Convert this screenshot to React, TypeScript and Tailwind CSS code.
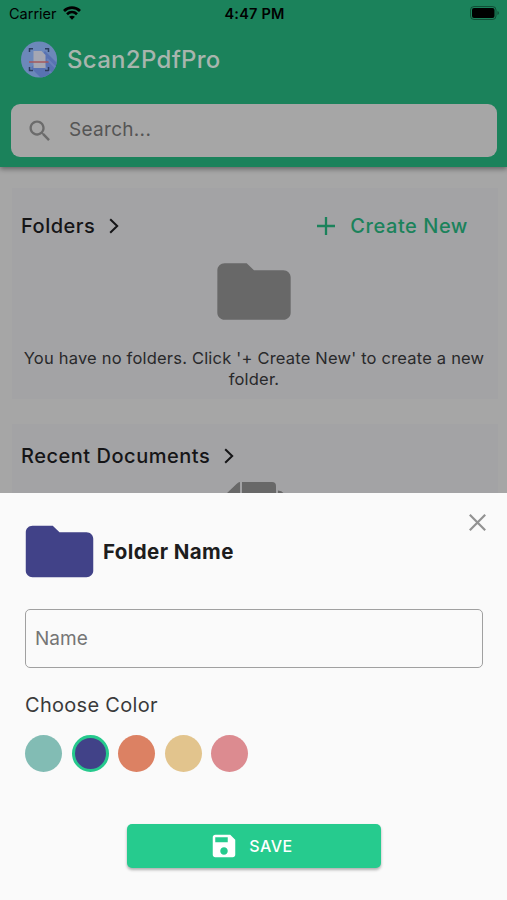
import React, { useState } from 'react';

const colors = [
  { name: 'teal', value: '#82bcb4' },
  { name: 'indigo', value: '#414288' },
  { name: 'orange', value: '#dc8163' },
  { name: 'sand', value: '#e2c48d' },
  { name: 'pink', value: '#dc8b90' },
];

const FOLDER_PATH = 'M10 4H4c-1.1 0-1.99.9-1.99 2L2 18c0 1.1.9 2 2 2h16c1.1 0 2-.9 2-2V8c0-1.1-.9-2-2-2h-8l-2-2z';

const StatusBar: React.FC = () => (
  <div className="grid grid-cols-3 items-center h-[27px] pl-[9px] pr-[7px] text-black">
    <div className="flex items-center gap-[6px]">
      <span className="pt-px text-[14.5px] leading-none">Carrier</span>
      <svg className="mb-px" width="18" height="14" viewBox="0 0 18 14" fill="none" stroke="currentColor" strokeWidth="2.7">
        <path d="M1 5C5.5.5 12.5.5 17 5" />
        <path d="M4 8.2c2.9-2.7 7.1-2.7 10 0" />
        <path d="M9 13.7 6.1 10.8c1.7-1.4 4.1-1.4 5.8 0z" fill="currentColor" stroke="none" />
      </svg>
    </div>
    <span className="pt-px text-center text-[14.5px] leading-none font-semibold tracking-[0.2px]">4:47 PM</span>
    <svg className="justify-self-end mb-[2px]" width="30" height="14" viewBox="0 0 30 14">
      <rect x="0.5" y="0.5" width="25.5" height="13" rx="3.5" fill="none" stroke="#000" strokeOpacity="0.4" />
      <rect x="2" y="2" width="22.5" height="10" rx="2" fill="#000" />
      <path d="M27.5 5v4c1.800-.7 1.800-3.300 0-4z" fill="#000" fillOpacity="0.45" />
    </svg>
  </div>
);

const Logo: React.FC = () => (
  <svg width="37" height="37" viewBox="0 0 37 37">
    <defs>
      <clipPath id="disc">
        <circle cx="18" cy="18.5" r="18" />
      </clipPath>
    </defs>
    <g clipPath="url(#disc)">
      <rect width="37" height="37" fill="#6c88ba" />
      <path d="M24 10 37 23v14H20L10 27z" fill="#5872b2" />
      <path d="m26 18 11 11M22 24l13 13" stroke="#6780ba" strokeWidth="2" />
    </g>
    <path d="M12.5 10h8l4 4v13h-12z" fill="#a5a7b3" />
    <path d="M8.5 11V7.7H12M24 7.7h3.5V11M8.5 26v3.5H12M24 29.5h3.5V26" fill="none" stroke="#2c3d5e" strokeWidth="1.5" />
    <path d="M8 21h19.5" stroke="#a5595c" strokeWidth="1.5" />
  </svg>
);

const Chevron: React.FC = () => (
  <svg width="10" height="16" viewBox="0 0 10 16" fill="none" stroke="#151517" strokeWidth="2">
    <path d="m1.200 1.200 7 6.800-7 6.800" />
  </svg>
);

const Header: React.FC = () => (
  <header className="relative h-[167px] bg-[#1b825b] shadow-[0_2px_5px_rgba(0,0,0,0.4)]">
    <StatusBar />
    <div className="flex items-center h-[65px] pl-[21px] gap-[9px]">
      <Logo />
      <h1 className="text-[24px] font-medium text-[#a8b5ae] tracking-[0.3px]">Scan2PdfPro</h1>
    </div>
    <div className="flex items-center mt-3 ml-[11px] mr-[10px] h-[53px] rounded-[9px] bg-[#a6a6a6] pl-[15px] gap-[15px]">
      <svg width="28" height="28" viewBox="0 0 24 24" fill="#6b6b6b">
        <path d="M15.5 14h-.79l-.28-.27C15.41 12.59 16 11.11 16 9.5 16 5.91 13.09 3 9.5 3S3 5.91 3 9.5 5.91 16 9.5 16c1.61 0 3.09-.59 4.23-1.57l.27.28v.79l5 4.99L20.49 19l-4.99-5zm-6 0C7.01 14 5 11.99 5 9.5S7.01 5 9.5 5 14 7.01 14 9.5 11.99 14 9.5 14z" />
      </svg>
      <span className="text-[19px] text-[#555] tracking-[0.3px]">Search...</span>
    </div>
  </header>
);

const Documents: React.FC = () => (
  <main className="h-[326px] overflow-hidden pt-[21px] pl-[12px] pr-[9px]">
    <section className="h-[211px] bg-[#a3a3a5] px-[9px] pt-[25px]">
      <div className="flex items-center justify-between h-[25px] pr-[21px]">
        <div className="flex items-center gap-[14px]">
          <h2 className="text-[20px] font-medium text-[#151517] tracking-[0.5px]">Folders</h2>
          <Chevron />
        </div>
        <button className="flex items-center gap-[15px] text-[20px] font-medium text-[#1b825b] tracking-[0.55px]">
          <svg width="18" height="18" viewBox="0 0 18 18" stroke="currentColor" strokeWidth="2.3">
            <path d="M9 0v18M0 9h18" />
          </svg>
          Create New
        </button>
      </div>
      <svg className="mx-auto mt-[11px] relative right-px" width="88" height="85" viewBox="0 0 24 24" preserveAspectRatio="none" fill="#686868">
        <path d={FOLDER_PATH} />
      </svg>
      <p className="mt-[14px] -mx-2 pl-2 pr-[10px] text-center text-[16.5px] leading-[21px] text-[#29292b] tracking-[0.2px]">
        You have no folders. Click '+ Create New' to create a new folder.
      </p>
    </section>

    <section className="mt-[25px] h-[211px] bg-[#a3a3a5] px-[9px] pt-[19px]">
      <div className="flex items-center gap-[14px] h-[25px]">
        <h2 className="text-[20px] font-medium text-[#151517] tracking-[0.52px]">Recent Documents</h2>
        <Chevron />
      </div>
      <svg className="mx-auto mt-[14px]" width="62" height="70" viewBox="0 0 62 70" fill="#686868">
        <path d="M2 12 12.5 2q2-2 3.500-2v17H2z" />
        <path d="M18 0h30q4 0 4 4v50H2V19h16z" />
        <path d="M54 8.500q5 0 6 4V64H20v-8h34z" />
      </svg>
    </section>
  </main>
);

const FolderSheet: React.FC = () => {
  const [name, setName] = useState('');
  const [selected, setSelected] = useState('indigo');
  const folderColor = colors.find((color) => color.name === selected)?.value;

  return (
    <div className="relative h-[407px] bg-[#fafafa] pl-[25px] pr-6 pt-[18px]">
      {/* Close button */}
      <button className="absolute top-[21px] right-[21px]" aria-label="Close">
        <svg width="17" height="17" viewBox="0 0 17 17" stroke="#929292" strokeWidth="2.2">
          <path d="m.8.8 15.400 15.400M16.200.8.800 16.200" />
        </svg>
      </button>

      <div className="flex items-center h-20 -ml-[6.5px] gap-[3.5px]">
        <svg width="81" height="77" viewBox="0 0 24 24" preserveAspectRatio="none" fill={folderColor}>
          <path d={FOLDER_PATH} />
        </svg>
        <h2 className="pt-[2px] text-[20.5px] font-bold text-[#1d1d1d] tracking-[0.4px]">Folder Name</h2>
      </div>

      <input
        className="block w-full h-[59px] mt-[18px] px-[9px] rounded-[5px] border border-[#a0a0a0] text-[19px] placeholder:text-[#757575] placeholder:opacity-100 outline-none"
        placeholder="Name"
        value={name}
        onChange={(e) => setName(e.target.value)}
      />

      <p className="mt-[24px] text-[20px] leading-[26px] text-[#3a3a3a] tracking-[0.3px]">Choose Color</p>
      <div className="flex gap-[9.5px] mt-[17px]">
        {colors.map((color) => (
          <button
            key={color.name}
            aria-label={color.name}
            onClick={() => setSelected(color.name)}
            className={`w-[37px] h-[37px] rounded-full ${selected === color.name ? 'border-3 border-[#26c98d]' : ''}`}
            style={{ backgroundColor: color.value }}
          />
        ))}
      </div>

      <button className="flex items-center justify-center gap-[10px] w-[254px] h-[44px] mx-auto mt-[52px] pr-[6px] rounded-[5px] bg-[#26cb8e] text-white shadow-[0_2px_3px_rgba(0,0,0,0.3)]">
        <svg width="30" height="30" viewBox="0 0 24 24" fill="currentColor">
          <path d="M17 3H5c-1.11 0-2 .9-2 2v14c0 1.1.89 2 2 2h14c1.1 0 2-.9 2-2V7l-4-4zm-5 16c-1.66 0-3-1.34-3-3s1.34-3 3-3 3 1.34 3 3-1.34 3-3 3zm3-10H5V5h10v4z" />
        </svg>
        <span className="text-[16px] font-medium tracking-[0.5px]">SAVE</span>
      </button>
    </div>
  );
};

const App: React.FC = () => {
  return (
    <div className="w-full h-[900px] overflow-hidden bg-[#a6a6a6] font-['Inter',sans-serif]">
      <Header />
      <Documents />
      <FolderSheet />
    </div>
  );
};

export default App;
